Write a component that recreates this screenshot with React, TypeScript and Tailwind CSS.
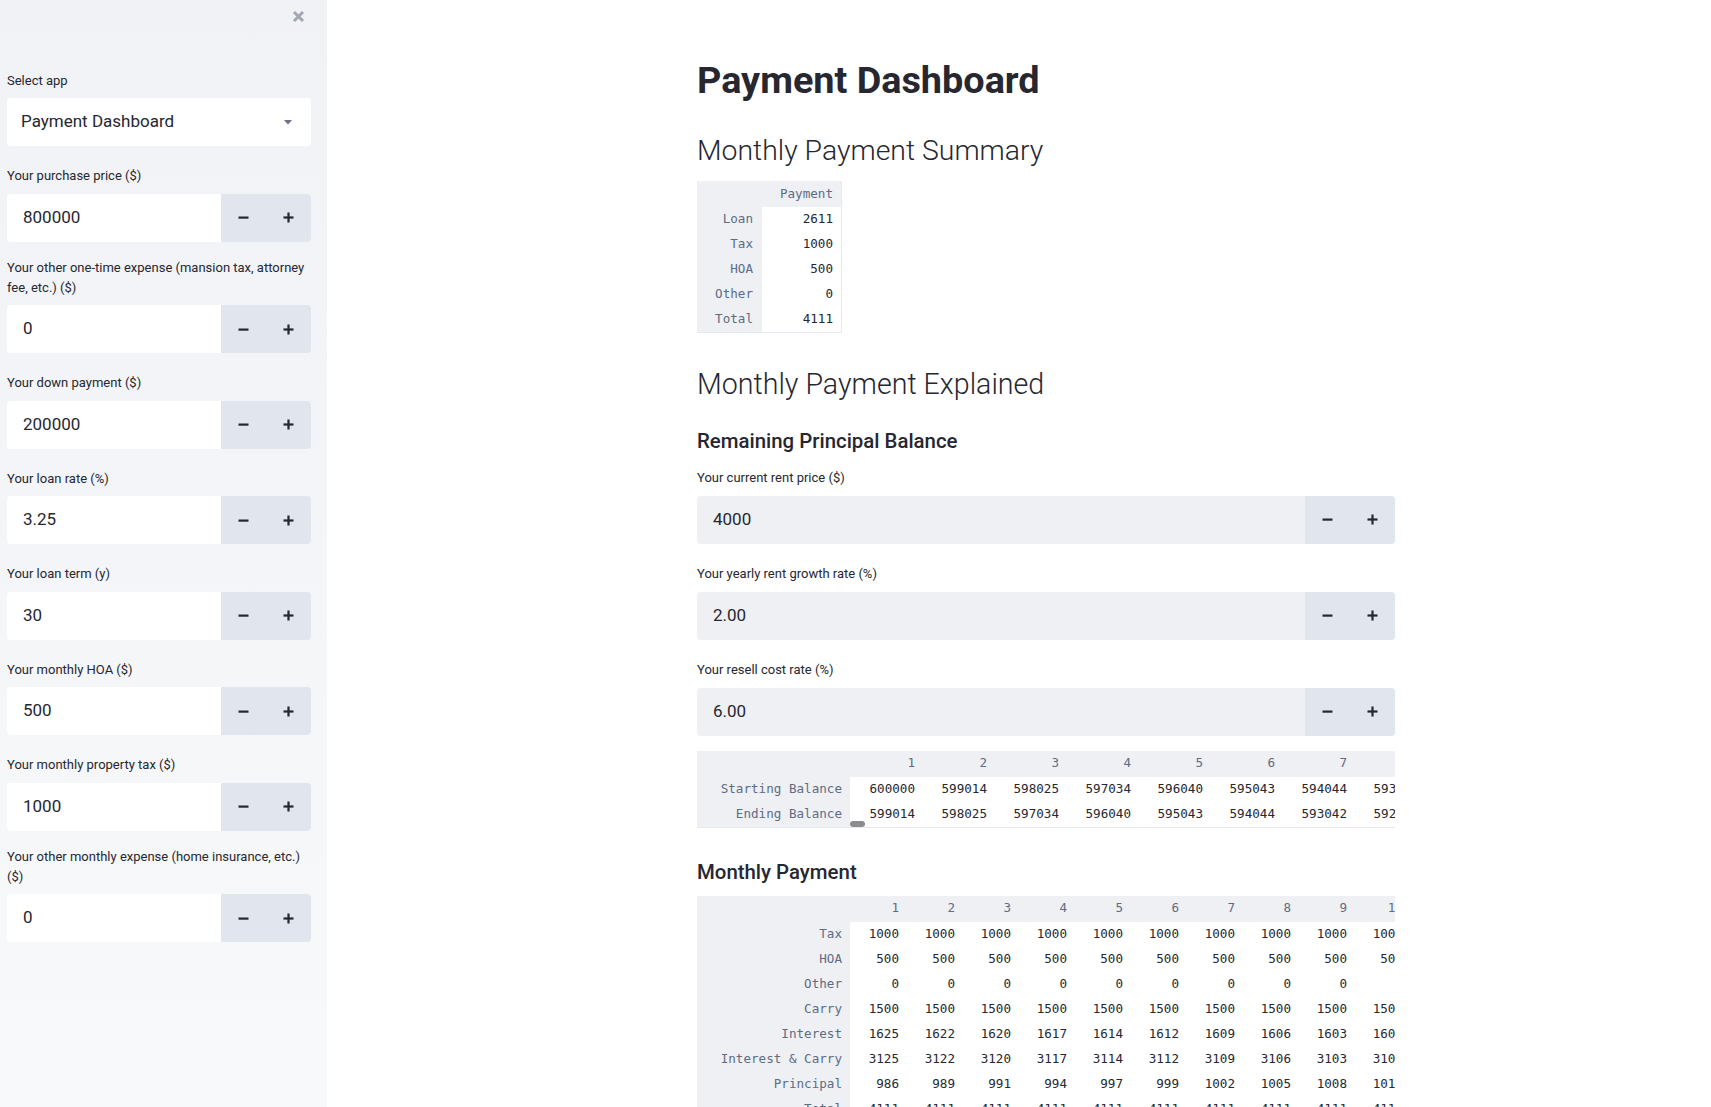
import React from "react";

const sans = "font-['Roboto','Liberation_Sans',sans-serif]";
const mono = "font-['DejaVu_Sans_Mono','Liberation_Mono',monospace]";

// sidebar number inputs
const sidebarFields = [
  { label: ["Your purchase price ($)"], value: "800000" },
  { label: ["Your other one-time expense (mansion tax, attorney", "fee, etc.) ($)"], value: "0" },
  { label: ["Your down payment ($)"], value: "200000" },
  { label: ["Your loan rate (%)"], value: "3.25" },
  { label: ["Your loan term (y)"], value: "30" },
  { label: ["Your monthly HOA ($)"], value: "500" },
  { label: ["Your monthly property tax ($)"], value: "1000" },
  { label: ["Your other monthly expense (home insurance, etc.)", "($)"], value: "0" },
];

const rentFields = [
  { label: "Your current rent price ($)", value: "4000" },
  { label: "Your yearly rent growth rate (%)", value: "2.00" },
  { label: "Your resell cost rate (%)", value: "6.00" },
];

const summaryRows = [
  ["Loan", "2611"],
  ["Tax", "1000"],
  ["HOA", "500"],
  ["Other", "0"],
  ["Total", "4111"],
];

const balanceCols = ["1", "2", "3", "4", "5", "6", "7", "8", "9"];
const balanceRows = [
  { name: "Starting Balance", values: ["600000", "599014", "598025", "597034", "596040", "595043", "594044", "593042", "592037"] },
  { name: "Ending Balance", values: ["599014", "598025", "597034", "596040", "595043", "594044", "593042", "592037", "591029"] },
];

const paymentCols = ["1", "2", "3", "4", "5", "6", "7", "8", "9", "10", "11"];
const paymentRows = [
  { name: "Tax", values: Array(11).fill("1000") },
  { name: "HOA", values: Array(11).fill("500") },
  { name: "Other", values: Array(11).fill("0") },
  { name: "Carry", values: Array(11).fill("1500") },
  { name: "Interest", values: ["1625", "1622", "1620", "1617", "1614", "1612", "1609", "1606", "1603", "1600", "1598"] },
  { name: "Interest & Carry", values: ["3125", "3122", "3120", "3117", "3114", "3112", "3109", "3106", "3103", "3100", "3098"] },
  { name: "Principal", values: ["986", "989", "991", "994", "997", "999", "1002", "1005", "1008", "1011", "1013"] },
  { name: "Total", values: Array(11).fill("4111") },
];

const MinusIcon = () => (
  <svg width="11" height="11" viewBox="0 0 11 11">
    <rect x="0.5" y="4.5" width="10" height="2.2" fill="#262730" />
  </svg>
);

const PlusIcon = () => (
  <svg width="11" height="11" viewBox="0 0 11 11">
    <rect x="0.5" y="4.4" width="10" height="2.2" fill="#262730" />
    <rect x="4.4" y="0.5" width="2.2" height="10" fill="#262730" />
  </svg>
);

const NumberInput = ({ value, main }: { value: string; main?: boolean }) => (
  <div className="flex h-12 rounded-[4px] overflow-hidden">
    <div
      className={
        "flex-1 flex items-center pl-4 text-[17px] text-[#262730] " +
        (main ? "bg-[#eef0f4]" : "bg-white")
      }
    >
      {value}
    </div>
    <button className="w-[45px] flex items-center justify-center bg-[#e1e5ee]">
      <MinusIcon />
    </button>
    <button className="w-[45px] flex items-center justify-center bg-[#e1e5ee]">
      <PlusIcon />
    </button>
  </div>
);

const Sidebar = () => (
  <aside className="relative w-[327px] shrink-0 h-full bg-gradient-to-b from-[#f0f2f6] to-[#f8f9fa] pl-[7px] pr-[16px] pt-[71px]">
    <button className="absolute top-[10px] left-[292px]">
      <svg width="13" height="13" viewBox="0 0 13 13">
        <path d="M2 2L11 11M11 2L2 11" stroke="#a3a7b1" strokeWidth="3" strokeLinecap="butt" />
      </svg>
    </button>

    <div className="text-[13px] leading-[20px] text-[#262730]">Select app</div>
    <div className="mt-[7px] h-12 bg-white rounded-[4px] flex items-center justify-between pl-[14px] pr-[19px]">
      <span className="text-[17px] text-[#262730]">Payment Dashboard</span>
      <svg width="8" height="5" viewBox="0 0 8 5">
        <path d="M0 0H8L4 4.5Z" fill="#6b7089" />
      </svg>
    </div>

    {sidebarFields.map((f, i) => (
      <div key={i} className={f.label.length > 1 ? "mt-[16px]" : "mt-[20px]"}>
        <div className="text-[13px] leading-[20px] text-[#262730]">
          {f.label.map((line, j) => (
            <div key={j} className="whitespace-nowrap">
              {line}
            </div>
          ))}
        </div>
        <div className="mt-[7.5px]">
          <NumberInput value={f.value} />
        </div>
      </div>
    ))}
  </aside>
);

const SummaryTable = () => (
  <div className={"inline-flex flex-col border-r border-b border-[#e6e9ef] text-[12.6px] " + mono}>
    <div className="flex h-[26px] items-center bg-[#eef0f4] text-[#5e6c84]">
      <div className="w-[65px]" />
      <div className="w-[79px] text-right pr-[8px]">Payment</div>
    </div>
    {summaryRows.map(([k, v]) => (
      <div key={k} className="flex h-[25px]">
        <div className="w-[65px] flex items-center justify-end pr-[9px] bg-[#eef0f4] text-[#5e6c84]">{k}</div>
        <div className="w-[79px] flex items-center justify-end pr-[8px] bg-white text-[#262730]">{v}</div>
      </div>
    ))}
  </div>
);

const WideTable = ({
  cols,
  rows,
  cellClass,
  thumb,
}: {
  cols: string[];
  rows: { name: string; values: string[] }[];
  cellClass: string;
  thumb?: boolean;
}) => (
  <div className={"relative w-full overflow-hidden border-b border-[#e6e9ef] text-[12.6px] " + mono}>
    <div className="flex h-[26px] bg-[#eef0f4] text-[#5e6c84]">
      <div className="w-[153px] shrink-0" />
      {cols.map((c) => (
        <div key={c} className={"shrink-0 flex items-center justify-end pr-[7px] " + cellClass}>
          {c}
        </div>
      ))}
    </div>
    {rows.map((r) => (
      <div key={r.name} className="flex h-[25px]">
        <div className="w-[153px] shrink-0 flex items-center justify-end pr-[8px] bg-[#eef0f4] text-[#5e6c84] whitespace-pre">
          {r.name}
        </div>
        {r.values.map((v, i) => (
          <div key={i} className={"shrink-0 flex items-center justify-end pr-[7px] bg-white text-[#262730] " + cellClass}>
            {v}
          </div>
        ))}
      </div>
    ))}
    {thumb && (
      <div className="absolute left-[153px] bottom-[0px] w-[15px] h-[6px] rounded-full bg-[#8c8c8c]" />
    )}
  </div>
);

export default function App() {
  return (
    <div className={"flex w-full h-[1107px] overflow-hidden bg-white text-[#262730] " + sans}>
      <Sidebar />
      <main className="flex-1 h-full overflow-hidden">
        <div className="ml-[370px] w-[698px] pt-[56px]">
          <h1 className="text-[37.8px] leading-[48px] font-bold text-[#262730]">Payment Dashboard</h1>
          <h2 className="mt-[27px] text-[28.4px] leading-[40px] font-light text-[#262730]">Monthly Payment Summary</h2>
          <div className="mt-[6px]">
            <SummaryTable />
          </div>

          <h2 className="mt-[31px] text-[28.6px] leading-[40px] font-light text-[#262730]">Monthly Payment Explained</h2>
          <h3 className="mt-[22px] text-[20.4px] leading-[30px] font-medium text-[#262730]">Remaining Principal Balance</h3>

          {rentFields.map((f, i) => (
            <div key={f.label} className={i === 0 ? "mt-[12px]" : "mt-[20.5px]"}>
              <div className="text-[13px] leading-[20px] text-[#262730]">{f.label}</div>
              <div className="mt-[7.5px]">
                <NumberInput value={f.value} main />
              </div>
            </div>
          ))}

          <div className="mt-[15px]">
            <WideTable cols={balanceCols} rows={balanceRows} cellClass="w-[72px]" thumb />
          </div>

          <h3 className="mt-[29px] text-[20.4px] leading-[30px] font-medium text-[#262730]">Monthly Payment</h3>
          <div className="mt-[9px]">
            <WideTable cols={paymentCols} rows={paymentRows} cellClass="w-[56px]" />
          </div>
        </div>
      </main>
    </div>
  );
}
